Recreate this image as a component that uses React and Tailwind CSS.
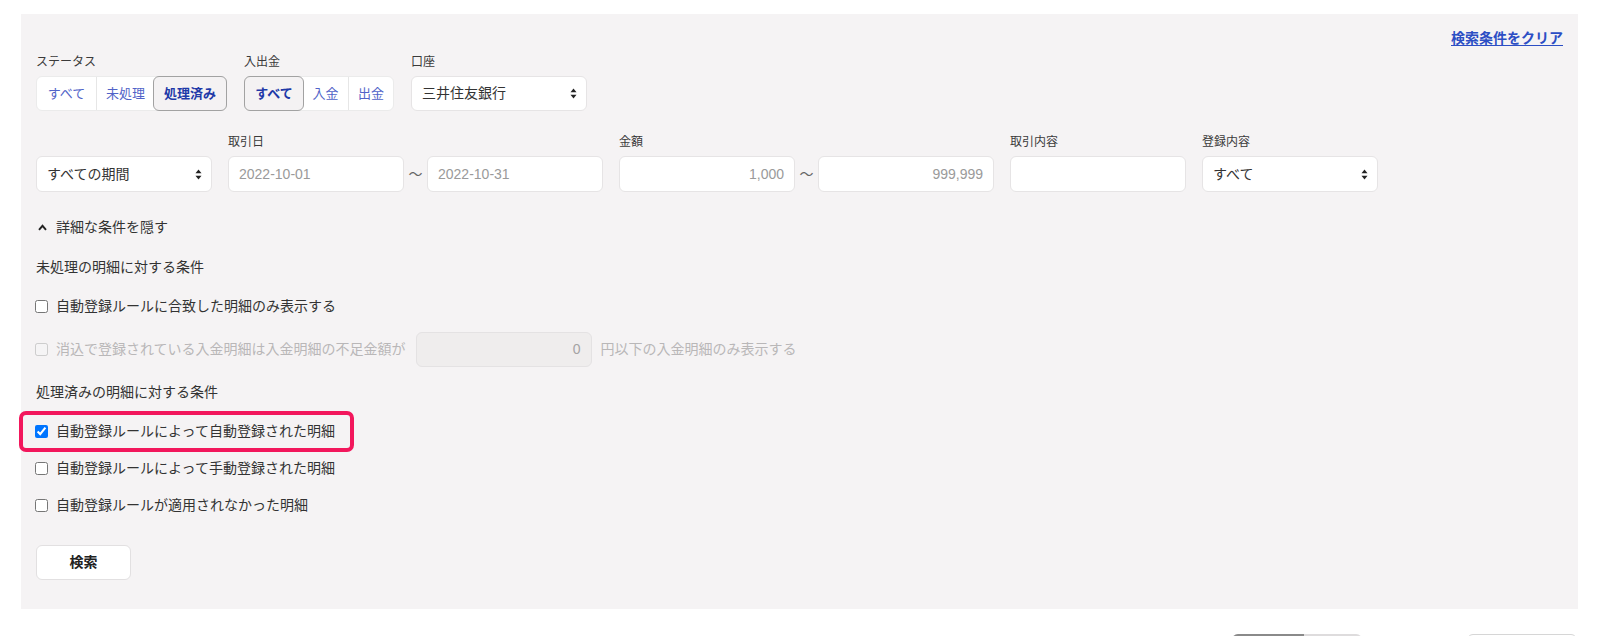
import React from "react";

const FONT = "font-['Liberation_Sans','Noto_Sans_CJK_JP',sans-serif]";

function Arrows() {
  return (
    <svg width="7" height="11" viewBox="0 0 7 11" className="shrink-0">
      <path d="M3.5 0.5 L6.5 4.2 L0.5 4.2 Z" fill="#222" />
      <path d="M3.5 10.5 L6.5 6.8 L0.5 6.8 Z" fill="#222" />
    </svg>
  );
}

function Segmented({ items }) {
  return (
    <div className="flex h-[35px] bg-white rounded-[6px] border border-[#ebebeb]">
      {items.map((it, i) =>
        it.active ? (
          <div
            key={it.label}
            className={`${it.w} -my-px -mx-px flex items-center justify-center text-[13px] font-bold text-[#1e39a8] bg-[#f4f2f3] border border-[#a2a2a2] rounded-[6px]`}
          >
            {it.label}
          </div>
        ) : (
          <div
            key={it.label}
            className={`${it.w} flex items-center justify-center text-[13px] text-[#5163c8] ${i > 0 && !items[i - 1].active ? "border-l border-[#e6e6e6]" : ""}`}
          >
            {it.label}
          </div>
        )
      )}
    </div>
  );
}

function Field({ label, children }) {
  return (
    <div className="flex flex-col">
      <div className="h-[16px] leading-[16px] text-[12px] text-[#3a3a3a] mb-[6px]">{label}</div>
      {children}
    </div>
  );
}

function SelectBox({ value, h = "h-[36px]" }) {
  return (
    <div className={`w-[176px] ${h} bg-white border border-[#e6e4e5] rounded-[6px] flex items-center justify-between pl-[10px] pr-[9px] text-[14px] text-[#333]`}>
      <span>{value}</span>
      <Arrows />
    </div>
  );
}

function TextBox({ value = "", right = false }) {
  return (
    <div className={`w-[176px] h-[36px] bg-white border border-[#e6e4e5] rounded-[6px] flex items-center px-[10px] text-[14px] text-[#9a9a9a] ${right ? "justify-end" : ""}`}>
      {value}
    </div>
  );
}

function Tilde() {
  return <div className="w-[23px] h-[36px] flex items-center justify-center text-[14px] text-[#666]">〜</div>;
}

function Check({ label, checked = false }) {
  return (
    <label className="flex items-center h-[20px] text-[14px] text-[#333]">
      <input type="checkbox" defaultChecked={checked} className="w-[13px] h-[13px] m-0 -ml-px mr-[8px]" />
      <span>{label}</span>
    </label>
  );
}

export default function App() {
  return (
    <div className={`min-h-screen bg-white ${FONT} text-[#333] pl-[21px] pr-[22px] pt-[14px]`}>
      <div className="bg-[#f5f3f4] h-[595px] px-[15px] pt-[14px] flex flex-col">
        <div className="flex justify-end h-[20px] items-center">
          <a className="text-[14px] font-bold text-[#2c4ec4] underline underline-offset-2">検索条件をクリア</a>
        </div>

        <div className="flex gap-[17px] mt-[6px]">
          <Field label="ステータス">
            <Segmented
              items={[
                { label: "すべて", w: "w-[59px]" },
                { label: "未処理", w: "w-[58px]" },
                { label: "処理済み", w: "w-[74px]", active: true },
              ]}
            />
          </Field>
          <Field label="入出金">
            <Segmented
              items={[
                { label: "すべて", w: "w-[60px]", active: true },
                { label: "入金", w: "w-[45px]" },
                { label: "出金", w: "w-[45px]" },
              ]}
            />
          </Field>
          <Field label="口座">
            <SelectBox value="三井住友銀行" h="h-[35px]" />
          </Field>
        </div>

        <div className="flex gap-[16px] mt-[23px]">
          <Field label="">
            <SelectBox value="すべての期間" />
          </Field>
          <Field label="取引日">
            <div className="flex">
              <TextBox value="2022-10-01" />
              <Tilde />
              <TextBox value="2022-10-31" />
            </div>
          </Field>
          <Field label="金額">
            <div className="flex">
              <TextBox value="1,000" right />
              <Tilde />
              <TextBox value="999,999" right />
            </div>
          </Field>
          <Field label="取引内容">
            <TextBox />
          </Field>
          <Field label="登録内容">
            <SelectBox value="すべて" />
          </Field>
        </div>

        <div className="flex items-center h-[20px] mt-[25px] text-[14px] text-[#333]">
          <svg width="9" height="7" viewBox="0 0 9 7" className="ml-[2px]">
            <path d="M1 5.8 L4.5 1.8 L8 5.8" fill="none" stroke="#222" strokeWidth="1.9" />
          </svg>
          <span className="ml-[9px]">詳細な条件を隠す</span>
        </div>

        <div className="h-[20px] leading-[20px] mt-[20px] text-[14px] text-[#333]">未処理の明細に対する条件</div>

        <div className="mt-[19px]">
          <Check label="自動登録ルールに合致した明細のみ表示する" />
        </div>

        <div className="flex items-center mt-[16px] h-[35px] text-[14px] text-[#b9b7b8]">
          <input type="checkbox" disabled className="w-[13px] h-[13px] m-0 -ml-px mr-[8px]" />
          <span>消込で登録されている入金明細は入金明細の不足金額が</span>
          <div className="w-[176px] h-[35px] ml-[10px] mr-[9px] bg-[#efeded] border border-[#e4e2e3] rounded-[6px] flex items-center justify-end px-[10px] text-[#a5a3a4]">
            0
          </div>
          <span>円以下の入金明細のみ表示する</span>
        </div>

        <div className="h-[20px] leading-[20px] mt-[15px] text-[14px] text-[#333]">処理済みの明細に対する条件</div>

        <div className="relative mt-[19px]">
          <Check label="自動登録ルールによって自動登録された明細" checked />
          <div className="absolute -left-[17px] -top-[10px] w-[335px] h-[41px] border-[4px] border-[#f2175c] rounded-[7px] pointer-events-none" />
        </div>

        <div className="mt-[17.5px]">
          <Check label="自動登録ルールによって手動登録された明細" />
        </div>

        <div className="mt-[16.5px]">
          <Check label="自動登録ルールが適用されなかった明細" />
        </div>

        <button className="mt-[29.5px] w-[95px] h-[35px] bg-white border border-[#e2e0e1] rounded-[6px] text-[14px] font-bold text-[#222]">
          検索
        </button>
      </div>

      <div className="flex justify-end mt-[25px] pr-[1px]">
        <div className="flex w-[130px] h-[36px] rounded-t-[6px] overflow-hidden">
          <div className="w-[72px] bg-[#e8e6e7] border-t-2 border-[#8a8a8a]" />
          <div className="flex-1 bg-[#f5f3f4] border-t-2 border-[#dedcdd]" />
        </div>
        <div className="ml-[105px] w-[110px] h-[36px] bg-white border border-[#d6d6d6] rounded-[6px]" />
      </div>
    </div>
  );
}
